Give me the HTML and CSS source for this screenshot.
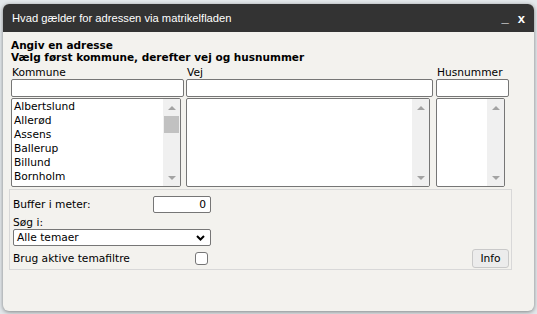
FILE: index.html
```html
<!DOCTYPE html>
<html lang="da">
<head>
    <meta charset="UTF-8">
    <meta name="viewport" content="width=device-width, initial-scale=1.0">
    <title>Matrikelfladen</title>
    <link rel="stylesheet" href="styles.css">
</head>
<body>
    <div class="dialog">
        <div class="titlebar">
            <span class="title">Hvad gælder for adressen via matrikelfladen</span>
            <span class="tools">
                <span class="tool-min">_</span>
                <span class="tool-close">x</span>
            </span>
        </div>

        <div class="content">
            <div class="intro">
                <div>Angiv en adresse</div>
                <div>Vælg først kommune, derefter vej og husnummer</div>
            </div>

            <div class="address">
                <div class="col col-kommune">
                    <label class="col-label">Kommune</label>
                    <input type="text" class="field">
                    <div class="listbox">
                        <ul class="items">
                            <li>Albertslund</li>
                            <li>Allerød</li>
                            <li>Assens</li>
                            <li>Ballerup</li>
                            <li>Billund</li>
                            <li>Bornholm</li>
                            <li>Brøndby</li>
                        </ul>
                        <div class="scrollbar">
                            <div class="arrow arrow-up"></div>
                            <div class="track"><div class="thumb"></div></div>
                            <div class="arrow arrow-down"></div>
                        </div>
                    </div>
                </div>

                <div class="col col-vej">
                    <label class="col-label">Vej</label>
                    <input type="text" class="field">
                    <div class="listbox">
                        <ul class="items"></ul>
                        <div class="scrollbar">
                            <div class="arrow arrow-up"></div>
                            <div class="track"></div>
                            <div class="arrow arrow-down"></div>
                        </div>
                    </div>
                </div>

                <div class="col col-husnr">
                    <label class="col-label">Husnummer</label>
                    <input type="text" class="field">
                    <div class="listbox">
                        <ul class="items"></ul>
                        <div class="scrollbar">
                            <div class="arrow arrow-up"></div>
                            <div class="track"></div>
                            <div class="arrow arrow-down"></div>
                        </div>
                    </div>
                </div>
            </div>

            <fieldset class="options">
                <div class="row-buffer">
                    <label class="buffer-label">Buffer i meter:</label>
                    <input type="text" class="field buffer-input" value="0">
                </div>
                <div class="search-label">Søg i:</div>
                <div class="select">
                    <span>Alle temaer</span>
                    <svg class="chevron" width="9" height="6" viewBox="0 0 9 6">
                        <path d="M1 1 L4.5 4.5 L8 1" fill="none" stroke="#000" stroke-width="2"/>
                    </svg>
                </div>
                <div class="row-filter">
                    <label class="filter-label">Brug aktive temafiltre</label>
                    <span class="checkbox"></span>
                    <button class="info-btn">Info</button>
                </div>
            </fieldset>
        </div>
    </div>
</body>
</html>
```

FILE: styles.css
```css
body {
    margin: 0;
    padding: 4px 3px 3px 3px;
    background-color: #e3e8eb;
    font-family: "DejaVu Sans", Verdana, sans-serif;
    font-size: 10.67px;
    color: #000;
}
.dialog {
    width: 531px;
    height: 307px;
    background-color: #f3f2ee;
    border-radius: 6px;
    box-shadow: 0 1px 4px rgba(0,0,0,0.45);
    overflow: hidden;
}
.titlebar {
    height: 28px;
    background-color: #333;
    color: #fff;
    display: flex;
    align-items: center;
    justify-content: space-between;
    padding: 0 9px 0 9px;
}
.title {
    font-family: "Liberation Sans", Arial, sans-serif;
    font-size: 11.2px;
}
.tools {
    display: flex;
    gap: 9px;
    font-family: "Liberation Sans", Arial, sans-serif;
    font-weight: bold;
    font-size: 13px;
    line-height: 13px;
}
.tool-min {
    position: relative;
    top: -1px;
}
.content {
    padding: 7px 0 0 8px;
}
.intro {
    font-weight: bold;
    font-size: 10.5px;
    line-height: 12px;
}
.address {
    display: flex;
    margin-top: 3px;
}
.col {
    display: flex;
    flex-direction: column;
}
.col-kommune {
    width: 173px;
    margin-right: 2px;
}
.col-vej {
    width: 247px;
    margin-right: 3px;
}
.col-husnr {
    width: 73px;
}
.col-label {
    height: 13px;
    line-height: 13px;
    padding-left: 1px;
}
.field {
    box-sizing: border-box;
    height: 18px;
    width: 100%;
    margin: 0;
    border: 1px solid #767676;
    border-radius: 2px;
    background: #fff;
    font: inherit;
    padding: 0 3px;
}
.listbox {
    box-sizing: border-box;
    height: 89px;
    margin-top: 1px;
    border: 1px solid #767676;
    border-radius: 2px;
    background: #fff;
    display: flex;
    overflow: hidden;
}
.col-kommune .listbox { width: 170px; }
.col-vej .listbox { width: 244px; }
.col-husnr .listbox { width: 69px; }
.items {
    flex: 1;
    list-style: none;
    margin: 0;
    padding: 1px 0 0 2px;
    overflow: hidden;
}
.items li {
    height: 14px;
    line-height: 14px;
    white-space: nowrap;
}
.scrollbar {
    width: 17px;
    background: #f0f0f0;
    display: flex;
    flex-direction: column;
}
.arrow {
    height: 17px;
    display: flex;
    align-items: center;
    justify-content: center;
}
.arrow::before {
    content: "";
    border-left: 4px solid transparent;
    border-right: 4px solid transparent;
}
.arrow-up::before {
    border-bottom: 4px solid #a3a3a3;
}
.arrow-down::before {
    border-top: 4px solid #a3a3a3;
}
.track {
    flex: 1;
    padding: 0 1px;
}
.thumb {
    height: 17px;
    background: #c1c1c1;
}
.options {
    box-sizing: border-box;
    width: 503px;
    height: 81px;
    margin: 2px 0 0 -2px;
    padding: 6px 2px 1px 3px;
    border: 1px solid #d8d8d8;
}
.row-buffer {
    display: flex;
    align-items: center;
    height: 17px;
}
.buffer-label {
    width: 140px;
}
.buffer-input {
    width: 58px;
    height: 17px;
    text-align: right;
    padding-right: 4px;
}
.search-label {
    height: 16px;
    line-height: 12px;
    padding-top: 4px;
    box-sizing: border-box;
}
.select {
    box-sizing: border-box;
    width: 198px;
    height: 17px;
    border: 1px solid #767676;
    border-radius: 2px;
    background: #fff;
    display: flex;
    align-items: center;
    justify-content: space-between;
    padding: 0 5px 0 3px;
}
.chevron {
    margin-top: 1px;
}
.row-filter {
    display: flex;
    align-items: center;
    height: 19px;
    margin-top: 3px;
}
.filter-label {
    width: 182px;
}
.checkbox {
    box-sizing: border-box;
    width: 13px;
    height: 13px;
    border: 1px solid #767676;
    border-radius: 3px;
    background: #fff;
}
.info-btn {
    margin-left: auto;
    box-sizing: border-box;
    width: 37px;
    height: 19px;
    padding: 0;
    border: 1px solid #c9c9c9;
    border-radius: 3px;
    background: #ececec;
    font: inherit;
    color: #000;
}
```
